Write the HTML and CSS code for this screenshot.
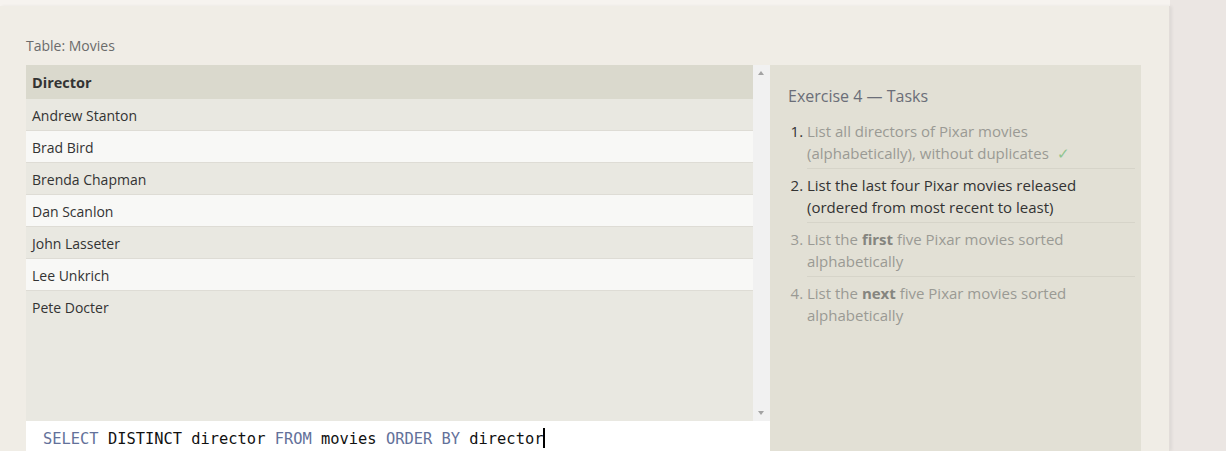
FILE: index.html
```html
<!DOCTYPE html>
<html>
<head>
<meta charset="utf-8">
<link rel="stylesheet" href="styles.css">
</head>
<body>
<div class="topstrip"></div>
<div class="card">
  <div class="title">Table: Movies</div>
  <div class="panel">
    <div class="leftcol">
      <div class="tablearea">
        <div class="table">
          <div class="row head">Director</div>
          <div class="row odd">Andrew Stanton</div>
          <div class="row even">Brad Bird</div>
          <div class="row odd">Brenda Chapman</div>
          <div class="row even">Dan Scanlon</div>
          <div class="row odd">John Lasseter</div>
          <div class="row even">Lee Unkrich</div>
          <div class="row odd last">Pete Docter</div>
        </div>
        <div class="scrollbar">
          <span class="arrow up"></span>
          <span class="arrow down"></span>
        </div>
      </div>
      <div class="editor"><span class="kw">SELECT</span> DISTINCT director <span class="kw">FROM</span> movies <span class="kw">ORDER BY</span> director<span class="cursor"></span></div>
    </div>
    <div class="tasks">
      <div class="heading">Exercise 4 — Tasks</div>
      <ol class="list">
        <li class="done"><div class="t">List all directors of Pixar movies (alphabetically), without duplicates <span class="check">✓</span></div></li>
        <li class="active"><div class="t">List the last four Pixar movies released (ordered from most recent to least)</div></li>
        <li class="todo"><div class="t">List the <b>first</b> five Pixar movies sorted alphabetically</div></li>
        <li class="todo nob"><div class="t">List the <b>next</b> five Pixar movies sorted alphabetically</div></li>
      </ol>
    </div>
  </div>
</div>
</body>
</html>
```
FILE: styles.css
```css
html, body {
  margin: 0;
  padding: 0;
}
body {
  background: #ebe6e3;
  font-family: "Open Sans", "Liberation Sans", sans-serif;
  width: 1226px;
  height: 451px;
  overflow: hidden;
}
.topstrip {
  height: 6px;
  width: 1170px;
  background: #f6f3ef;
}
.card {
  width: 1170px;
  height: 445px;
  box-sizing: border-box;
  background: #f0ede6;
  padding: 30px 28px 0 26px;
  box-shadow: 2px 0 3px rgba(0,0,0,0.06);
  border-right: 1px solid #e2ddd9;
}
.title {
  font-size: 14px;
  line-height: 20px;
  color: #6b6b6b;
  margin-bottom: 9px;
}
.panel {
  display: flex;
  height: 386px;
}
.leftcol {
  width: 744px;
  display: flex;
  flex-direction: column;
}
.tablearea {
  display: flex;
  height: 356px;
  flex-shrink: 0;
}
.table {
  width: 727px;
  background: #e9e8e1;
}
.row {
  height: 32px;
  box-sizing: border-box;
  border-bottom: 1px solid #dedcd5;
  padding-left: 6px;
  font-size: 14px;
  line-height: 33px;
  color: #333;
}
.row.head {
  height: 34px;
  line-height: 35px;
  background: #dad9cd;
  font-weight: 700;
  border-bottom: none;
  font-size: 14.5px;
}
.row.odd { background: #e9e8e1; }
.row.even { background: #f8f8f6; }
.row.last { border-bottom: none; }
.scrollbar {
  width: 17px;
  background: #f1f1f1;
  position: relative;
}
.arrow {
  position: absolute;
  left: 5px;
  width: 0;
  height: 0;
  border-left: 3.5px solid transparent;
  border-right: 3.5px solid transparent;
}
.arrow.up {
  top: 6px;
  border-bottom: 4px solid #a3a3a3;
}
.arrow.down {
  bottom: 6px;
  border-top: 4px solid #a3a3a3;
}
.editor {
  height: 30px;
  overflow: hidden;
  background: #ffffff;
  padding-left: 17px;
  font-family: "DejaVu Sans Mono", "Liberation Mono", monospace;
  font-size: 15.4px;
  line-height: 37px;
  color: #111;
  white-space: pre;
}
.kw { color: #63719a; }
.cursor {
  display: inline-block;
  width: 2px;
  height: 20px;
  background: #000;
  vertical-align: -4px;
}
.tasks {
  width: 372px;
  background: #e2e0d5;
  padding: 20px 6px 0 18px;
  box-sizing: border-box;
}
.heading {
  font-size: 16px;
  line-height: 22px;
  color: #6b6e78;
  margin-bottom: 8px;
}
.list {
  margin: 0;
  padding-left: 19px;
  font-size: 15px;
  line-height: 22px;
}
.list li {
  padding: 5px 0 4px;
  border-bottom: 1px solid #d6d4c9;
}
.list .t {
  max-width: 290px;
}
.list li.nob { border-bottom: none; }
.list li.done { color: #333; }
.list li.done .t { color: #9a9a94; }
.check { color: #8fc48f; margin-left: 4px; }
.list li.active { color: #333; }
.list li.todo { color: #9a9a94; }
.list li.todo b { color: #85857f; }
```
